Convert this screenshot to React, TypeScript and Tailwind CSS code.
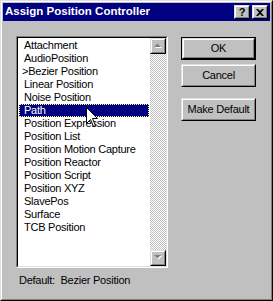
import React from "react";

const items = [
  "Attachment",
  "AudioPosition",
  "Bezier Position",
  "Linear Position",
  "Noise Position",
  "Path",
  "Position Expression",
  "Position List",
  "Position Motion Capture",
  "Position Reactor",
  "Position Script",
  "Position XYZ",
  "SlavePos",
  "Surface",
  "TCB Position",
];

// classic raised 3d frame: two nested 1px borders
function Raised({ className = "", children }: { className?: string; children?: React.ReactNode }) {
  return (
    <div className={`border border-t-[#dfdfdf] border-l-[#dfdfdf] border-r-black border-b-black ${className}`}>
      <div className="w-full h-full border border-t-white border-l-white border-r-[#808080] border-b-[#808080] bg-[#c0c0c0] flex items-center justify-center">
        {children}
      </div>
    </div>
  );
}

function Button({ label, isDefault }: { label: string; isDefault?: boolean }) {
  if (isDefault) {
    return (
      <div className="w-[75px] h-[23px] border border-black">
        <Raised className="w-full h-full">
          <span>{label}</span>
        </Raised>
      </div>
    );
  }
  return (
    <Raised className="w-[75px] h-[23px]">
      <span>{label}</span>
    </Raised>
  );
}

function ScrollArrow({ up }: { up?: boolean }) {
  return (
    <Raised className="w-[16px] h-[16px]">
      <svg width="9" height="6" viewBox="0 0 9 6">
        {up ? (
          <>
            <path d="M1 5 L4.5 1.5 L8 5 Z" fill="#ffffff" />
            <path d="M0 4 L3.5 0.5 L7 4 Z" fill="#808080" />
          </>
        ) : (
          <>
            <path d="M1 1 L8 1 L4.5 4.5 Z" fill="#ffffff" />
            <path d="M0 0 L7 0 L3.5 3.5 Z" fill="#808080" />
          </>
        )}
      </svg>
    </Raised>
  );
}

export default function App() {
  return (
    <div className="w-[273px] h-[301px] font-['Liberation_Sans',Arial,sans-serif] text-[11px] tracking-[-0.25px] text-black select-none">
      {/* window frame */}
      <div className="w-full h-full border border-t-[#dfdfdf] border-l-[#dfdfdf] border-r-black border-b-black">
        <div className="w-full h-full border border-t-white border-l-white border-r-[#808080] border-b-[#808080] bg-[#c0c0c0] p-[1px] flex flex-col">
          {/* title bar */}
          <div className="h-[18px] bg-[#000080] flex items-center pl-[2px] pr-[2px]">
            <span className="text-white font-bold text-[11.5px] tracking-normal flex-1">Assign Position Controller</span>
            <Raised className="w-[16px] h-[14px]">
              <span className="font-bold text-[11px] leading-none tracking-normal">?</span>
            </Raised>
            <Raised className="w-[16px] h-[14px] ml-[2px]">
              <svg width="8" height="7" viewBox="0 0 8 7">
                <path d="M0 0 H2 L4 2 L6 0 H8 L5 3.5 L8 7 H6 L4 5 L2 7 H0 L3 3.5 Z" fill="#000" />
              </svg>
            </Raised>
          </div>

          {/* body */}
          <div className="flex pl-[13px] pt-[15px]">
            <div className="flex flex-col">
              {/* listbox (sunken) */}
              <div className="w-[152px] h-[232px] border border-t-[#808080] border-l-[#808080] border-r-white border-b-white">
                <div className="w-full h-full border border-t-black border-l-black border-r-[#dfdfdf] border-b-[#dfdfdf] bg-white flex">
                  <div className="relative flex-1 pt-[1px]">
                    {items.map((item) => {
                      const selected = item === "Path";
                      return (
                        <div
                          key={item}
                          className={`mx-[1px] h-[13px] leading-[11px] pl-[4px] whitespace-nowrap border border-dotted ${
                            selected ? "bg-[#000080] text-white border-[#ffff7f]" : "border-transparent"
                          }`}
                        >
                          {item === "Bezier Position" ? (
                            <span className="-ml-[2px]">&gt;{item}</span>
                          ) : (
                            item
                          )}
                        </div>
                      );
                    })}
                    {/* mouse pointer */}
                    <svg className="absolute left-[68px] top-[69px]" width="13" height="21" viewBox="0 0 13 21">
                      <path
                        d="M0.5 0.5 L0.5 16.5 L4.5 12.5 L7.5 19.5 L9.5 18.5 L6.5 11.5 L11.5 11.5 Z"
                        fill="#ffffff"
                        stroke="#000000"
                        strokeWidth="1"
                      />
                    </svg>
                  </div>
                  {/* disabled scrollbar */}
                  <div className="w-[16px] flex flex-col bg-[image:repeating-conic-gradient(#ffffff_0%_25%,#c0c0c0_0%_50%)] bg-[length:2px_2px]">
                    <ScrollArrow up />
                    <div className="flex-1" />
                    <ScrollArrow />
                  </div>
                </div>
              </div>
              <div className="mt-[6px] pl-[3px] h-[13px] leading-[13px] whitespace-pre">Default:  Bezier Position</div>
            </div>

            {/* buttons */}
            <div className="flex flex-col ml-[13px] pt-[1px]">
              <Button label="OK" isDefault />
              <div className="mt-[4px]">
                <Button label="Cancel" />
              </div>
              <div className="mt-[11px]">
                <Button label="Make Default" />
              </div>
            </div>
          </div>
        </div>
      </div>
    </div>
  );
}
